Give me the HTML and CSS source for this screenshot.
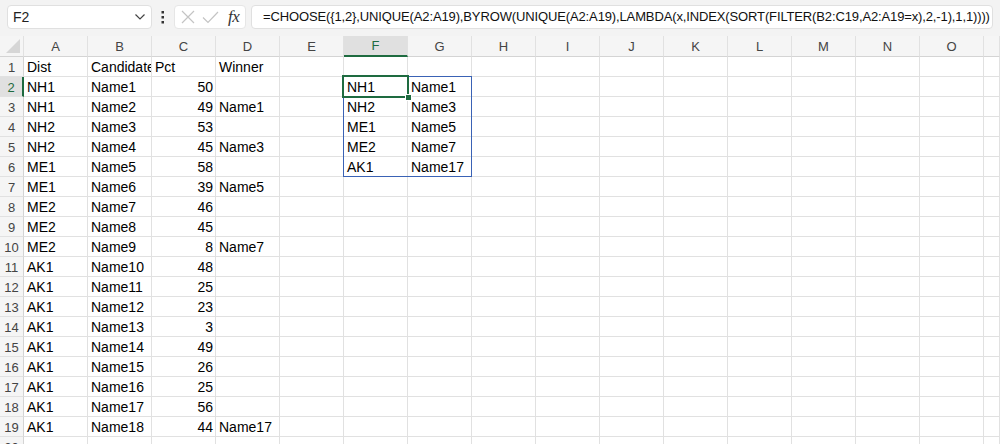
FILE: index.html
```html
<!DOCTYPE html>
<html>
<head>
<meta charset="utf-8">
<link rel="stylesheet" href="styles.css">
</head>
<body>
<div class="app">
  <div class="topbar">
    <div class="namebox">
      <span class="nb-text">F2</span>
      <svg class="chev" width="10" height="6" viewBox="0 0 10 6"><path d="M0.5 0.5 L5 5 L9.5 0.5" fill="none" stroke="#444" stroke-width="1.2"/></svg>
    </div>
    <div class="dots">
      <svg width="4" height="14" viewBox="0 0 4 14"><rect x="0.5" y="1" width="2.5" height="2.5" fill="#333"/><rect x="0.5" y="6" width="2.5" height="2.5" fill="#333"/><rect x="0.5" y="11" width="2.5" height="2.5" fill="#333"/></svg>
    </div>
    <div class="fnbox">
      <svg class="ico-x" width="14" height="14" viewBox="0 0 14 14"><path d="M1 1 L13 13 M13 1 L1 13" stroke="#c4c4c4" stroke-width="1.2" fill="none"/></svg>
      <svg class="ico-ok" width="17" height="13" viewBox="0 0 17 13"><path d="M1 6.5 L6 11.5 L16 1" stroke="#c4c4c4" stroke-width="1.2" fill="none"/></svg>
      <span class="fx">fx</span>
    </div>
    <div class="formula">=CHOOSE({1,2},UNIQUE(A2:A19),BYROW(UNIQUE(A2:A19),LAMBDA(x,INDEX(SORT(FILTER(B2:C19,A2:A19=x),2,-1),1,1))))</div>
  </div>

  <div class="sheet">
    <div class="row head">
      <div class="corner"><svg width="14" height="14" viewBox="0 0 14 14"><path d="M14 0 L14 14 L0 14 Z" fill="#d6d6d6"/></svg></div>
      <div>A</div><div>B</div><div>C</div><div>D</div><div>E</div><div class="sel">F</div><div>G</div><div>H</div><div>I</div><div>J</div><div>K</div><div>L</div><div>M</div><div>N</div><div>O</div><div></div>
    </div>
    <div class="row"><b>1</b><div>Dist</div><div>Candidate</div><div>Pct</div><div>Winner</div><i></i><i></i><i></i><i></i><i></i><i></i><i></i><i></i><i></i><i></i><i></i><i></i></div>
    <div class="row"><b class="sel">2</b><div>NH1</div><div>Name1</div><div class="n">50</div><i></i><i></i><div>NH1</div><div>Name1</div><i></i><i></i><i></i><i></i><i></i><i></i><i></i><i></i><i></i></div>
    <div class="row"><b>3</b><div>NH1</div><div>Name2</div><div class="n">49</div><div>Name1</div><i></i><div>NH2</div><div>Name3</div><i></i><i></i><i></i><i></i><i></i><i></i><i></i><i></i><i></i></div>
    <div class="row"><b>4</b><div>NH2</div><div>Name3</div><div class="n">53</div><i></i><i></i><div>ME1</div><div>Name5</div><i></i><i></i><i></i><i></i><i></i><i></i><i></i><i></i><i></i></div>
    <div class="row"><b>5</b><div>NH2</div><div>Name4</div><div class="n">45</div><div>Name3</div><i></i><div>ME2</div><div>Name7</div><i></i><i></i><i></i><i></i><i></i><i></i><i></i><i></i><i></i></div>
    <div class="row"><b>6</b><div>ME1</div><div>Name5</div><div class="n">58</div><i></i><i></i><div>AK1</div><div>Name17</div><i></i><i></i><i></i><i></i><i></i><i></i><i></i><i></i><i></i></div>
    <div class="row"><b>7</b><div>ME1</div><div>Name6</div><div class="n">39</div><div>Name5</div><i></i><i></i><i></i><i></i><i></i><i></i><i></i><i></i><i></i><i></i><i></i><i></i></div>
    <div class="row"><b>8</b><div>ME2</div><div>Name7</div><div class="n">46</div><i></i><i></i><i></i><i></i><i></i><i></i><i></i><i></i><i></i><i></i><i></i><i></i><i></i></div>
    <div class="row"><b>9</b><div>ME2</div><div>Name8</div><div class="n">45</div><i></i><i></i><i></i><i></i><i></i><i></i><i></i><i></i><i></i><i></i><i></i><i></i><i></i></div>
    <div class="row"><b>10</b><div>ME2</div><div>Name9</div><div class="n">8</div><div>Name7</div><i></i><i></i><i></i><i></i><i></i><i></i><i></i><i></i><i></i><i></i><i></i><i></i></div>
    <div class="row"><b>11</b><div>AK1</div><div>Name10</div><div class="n">48</div><i></i><i></i><i></i><i></i><i></i><i></i><i></i><i></i><i></i><i></i><i></i><i></i><i></i></div>
    <div class="row"><b>12</b><div>AK1</div><div>Name11</div><div class="n">25</div><i></i><i></i><i></i><i></i><i></i><i></i><i></i><i></i><i></i><i></i><i></i><i></i><i></i></div>
    <div class="row"><b>13</b><div>AK1</div><div>Name12</div><div class="n">23</div><i></i><i></i><i></i><i></i><i></i><i></i><i></i><i></i><i></i><i></i><i></i><i></i><i></i></div>
    <div class="row"><b>14</b><div>AK1</div><div>Name13</div><div class="n">3</div><i></i><i></i><i></i><i></i><i></i><i></i><i></i><i></i><i></i><i></i><i></i><i></i><i></i></div>
    <div class="row"><b>15</b><div>AK1</div><div>Name14</div><div class="n">49</div><i></i><i></i><i></i><i></i><i></i><i></i><i></i><i></i><i></i><i></i><i></i><i></i><i></i></div>
    <div class="row"><b>16</b><div>AK1</div><div>Name15</div><div class="n">26</div><i></i><i></i><i></i><i></i><i></i><i></i><i></i><i></i><i></i><i></i><i></i><i></i><i></i></div>
    <div class="row"><b>17</b><div>AK1</div><div>Name16</div><div class="n">25</div><i></i><i></i><i></i><i></i><i></i><i></i><i></i><i></i><i></i><i></i><i></i><i></i><i></i></div>
    <div class="row"><b>18</b><div>AK1</div><div>Name17</div><div class="n">56</div><i></i><i></i><i></i><i></i><i></i><i></i><i></i><i></i><i></i><i></i><i></i><i></i><i></i></div>
    <div class="row"><b>19</b><div>AK1</div><div>Name18</div><div class="n">44</div><div>Name17</div><i></i><i></i><i></i><i></i><i></i><i></i><i></i><i></i><i></i><i></i><i></i><i></i></div>
    <div class="row"><b>20</b><i></i><i></i><i></i><i></i><i></i><i></i><i></i><i></i><i></i><i></i><i></i><i></i><i></i><i></i><i></i><i></i></div>

    <div class="spill"></div>
    <div class="active"><span class="handle"></span></div>
  </div>
</div>
</body>
</html>
```

FILE: styles.css
```css
* { box-sizing: border-box; }
html, body { margin: 0; padding: 0; }
body {
  width: 1000px;
  height: 444px;
  overflow: hidden;
  background: #fff;
  font-family: "Liberation Sans", Arial, sans-serif;
  color: #000;
}
.app { display: flex; flex-direction: column; }

.topbar {
  height: 36px;
  background: #f3f3f3;
  display: flex;
  align-items: flex-start;
  padding: 5px 7px 0 7px;
}
.namebox {
  width: 145px;
  height: 24px;
  background: #fff;
  border: 1px solid #e0e0e0;
  border-radius: 4px;
  display: flex;
  align-items: center;
  justify-content: space-between;
  padding: 0 6px 0 5px;
  font-size: 14px;
  color: #222;
}
.nb-text { line-height: 22px; }
.dots {
  width: 22px;
  height: 24px;
  display: flex;
  align-items: center;
  justify-content: center;
}
.fnbox {
  width: 72px;
  height: 24px;
  background: #fff;
  border: 1px solid #e6e6e6;
  border-radius: 4px;
  display: flex;
  align-items: center;
  padding-left: 6px;
  gap: 6px;
}
.ico-ok { margin-left: 1px; }
.fx {
  font-family: "Liberation Serif", "Times New Roman", serif;
  font-style: italic;
  font-size: 17px;
  color: #333;
  margin-left: 3px;
  letter-spacing: -0.5px;
}
.formula {
  margin-left: 5px;
  width: 742px;
  height: 24px;
  background: #fff;
  border: 1px solid #e0e0e0;
  border-radius: 4px;
  padding-left: 11px;
  font-size: 13px;
  letter-spacing: -0.13px;
  line-height: 22px;
  white-space: nowrap;
  overflow: hidden;
  color: #111;
}

.sheet { position: relative; }
.row {
  display: grid;
  grid-template-columns: 24px repeat(15, 64px) 1fr;
  height: 20px;
}
.row > * {
  border-right: 1px solid #e1e1e1;
  border-bottom: 1px solid #e1e1e1;
  font-size: 14px;
  line-height: 21px;
  padding: 0 2px 0 3px;
  white-space: nowrap;
  overflow: hidden;
  font-style: normal;
  font-weight: normal;
}
.row > .n { text-align: right; }
.row > b {
  background: #f5f5f5;
  color: #444;
  text-align: center;
  padding: 0;
  font-size: 13px;
  border-right-color: #d4d4d4;
}
.row > b.sel {
  background: #e0e0e0;
  color: #1e6b40;
  border-right: 2px solid #1e6b40;
}
.row.head { height: 21px; }
.head > div {
  background: #f5f5f5;
  color: #444;
  text-align: center;
  font-size: 13px;
  padding: 0;
  border-bottom-color: #d4d4d4;
  border-right-color: #e1e1e1;
  line-height: 21px;
}
.head > .corner {
  display: flex;
  align-items: flex-end;
  justify-content: flex-end;
  padding: 0 3px 3px 0;
}
.head > .sel {
  background: #e0e0e0;
  color: #1e6b40;
  border-bottom: 2px solid #1e6b40;
  line-height: 20px;
}

.spill {
  position: absolute;
  left: 343px;
  top: 40px;
  width: 129px;
  height: 101px;
  border: 1px solid #3a62b5;
  pointer-events: none;
}
.active {
  position: absolute;
  left: 342px;
  top: 39px;
  width: 67px;
  height: 23px;
  border: 2px solid #1e6b40;
}
.handle {
  position: absolute;
  right: -5px;
  bottom: -5px;
  width: 7px;
  height: 7px;
  background: #1e6b40;
  border: 1px solid #fff;
}
```
